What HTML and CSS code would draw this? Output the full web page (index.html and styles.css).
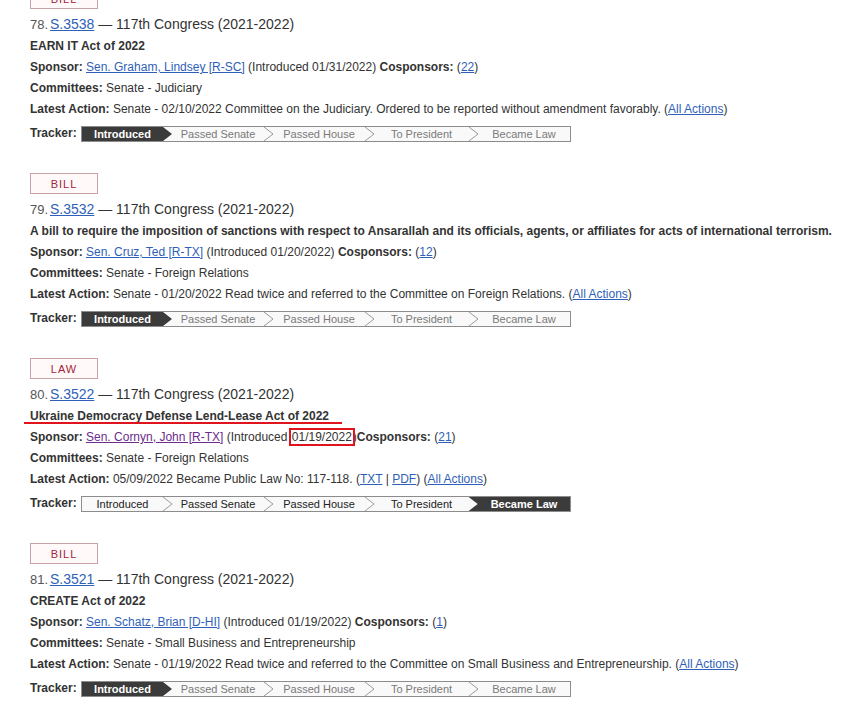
FILE: index.html
```html
<!DOCTYPE html>
<html>
<head>
<meta charset="utf-8">
<link rel="stylesheet" href="styles.css">
</head>
<body>
<ol class="results">
  <li class="item">
    <span class="badge">BILL</span>
    <div class="heading"><span class="num">78.</span> <a href="#">S.3538</a> — 117th Congress (2021-2022)</div>
    <div class="title">EARN IT Act of 2022</div>
    <div class="line"><b>Sponsor:</b> <a href="#">Sen. Graham, Lindsey [R-SC]</a> (Introduced 01/31/2022) <b>Cosponsors:</b> (<a href="#">22</a>)</div>
    <div class="line"><b>Committees:</b> Senate - Judiciary</div>
    <div class="line"><b>Latest Action:</b> Senate - 02/10/2022 Committee on the Judiciary. Ordered to be reported without amendment favorably. (<a href="#">All Actions</a>)</div>
    <div class="tracker-row"><b class="tlabel">Tracker:</b>
      <ol class="tracker">
        <li class="step s1 done first">Introduced</li>
        <li class="step s2">Passed Senate<svg class="chev" viewBox="0 0 9 14" preserveAspectRatio="none"><polyline points="0,0 9,7 0,14"/></svg></li>
        <li class="step s3">Passed House<svg class="chev" viewBox="0 0 9 14" preserveAspectRatio="none"><polyline points="0,0 9,7 0,14"/></svg></li>
        <li class="step s4">To President<svg class="chev" viewBox="0 0 9 14" preserveAspectRatio="none"><polyline points="0,0 9,7 0,14"/></svg></li>
        <li class="step s5 last">Became Law</li>
      </ol>
    </div>
  </li>
  <li class="item">
    <span class="badge">BILL</span>
    <div class="heading"><span class="num">79.</span> <a href="#">S.3532</a> — 117th Congress (2021-2022)</div>
    <div class="title">A bill to require the imposition of sanctions with respect to Ansarallah and its officials, agents, or affiliates for acts of international terrorism.</div>
    <div class="line"><b>Sponsor:</b> <a href="#">Sen. Cruz, Ted [R-TX]</a> (Introduced 01/20/2022) <b>Cosponsors:</b> (<a href="#">12</a>)</div>
    <div class="line"><b>Committees:</b> Senate - Foreign Relations</div>
    <div class="line"><b>Latest Action:</b> Senate - 01/20/2022 Read twice and referred to the Committee on Foreign Relations. (<a href="#">All Actions</a>)</div>
    <div class="tracker-row"><b class="tlabel">Tracker:</b>
      <ol class="tracker">
        <li class="step s1 done first">Introduced</li>
        <li class="step s2">Passed Senate<svg class="chev" viewBox="0 0 9 14" preserveAspectRatio="none"><polyline points="0,0 9,7 0,14"/></svg></li>
        <li class="step s3">Passed House<svg class="chev" viewBox="0 0 9 14" preserveAspectRatio="none"><polyline points="0,0 9,7 0,14"/></svg></li>
        <li class="step s4">To President<svg class="chev" viewBox="0 0 9 14" preserveAspectRatio="none"><polyline points="0,0 9,7 0,14"/></svg></li>
        <li class="step s5 last">Became Law</li>
      </ol>
    </div>
  </li>
  <li class="item">
    <span class="badge">LAW</span>
    <div class="heading"><span class="num">80.</span> <a href="#">S.3522</a> — 117th Congress (2021-2022)</div>
    <div class="title"><span class="marked">Ukraine Democracy Defense Lend-Lease Act of 2022<span class="red-line"></span></span></div>
    <div class="line"><b>Sponsor:</b> <a href="#" class="visited">Sen. Cornyn, John [R-TX]</a> (Introduced <span class="red-box">01/19/2022</span>)<b>Cosponsors:</b> (<a href="#">21</a>)</div>
    <div class="line"><b>Committees:</b> Senate - Foreign Relations</div>
    <div class="line"><b>Latest Action:</b> 05/09/2022 Became Public Law No: 117-118. (<a href="#">TXT</a> | <a href="#">PDF</a>) (<a href="#">All Actions</a>)</div>
    <div class="tracker-row"><b class="tlabel">Tracker:</b>
      <ol class="tracker law">
        <li class="step s1">Introduced<svg class="chev" viewBox="0 0 9 14" preserveAspectRatio="none"><polyline points="0,0 9,7 0,14"/></svg></li>
        <li class="step s2">Passed Senate<svg class="chev" viewBox="0 0 9 14" preserveAspectRatio="none"><polyline points="0,0 9,7 0,14"/></svg></li>
        <li class="step s3">Passed House<svg class="chev" viewBox="0 0 9 14" preserveAspectRatio="none"><polyline points="0,0 9,7 0,14"/></svg></li>
        <li class="step s4">To President<svg class="chev" viewBox="0 0 9 14" preserveAspectRatio="none"><polyline points="0,0 9,7 0,14"/></svg></li>
        <li class="step s5 last done notch">Became Law</li>
      </ol>
    </div>
  </li>
  <li class="item">
    <span class="badge">BILL</span>
    <div class="heading"><span class="num">81.</span> <a href="#">S.3521</a> — 117th Congress (2021-2022)</div>
    <div class="title">CREATE Act of 2022</div>
    <div class="line"><b>Sponsor:</b> <a href="#">Sen. Schatz, Brian [D-HI]</a> (Introduced 01/19/2022) <b>Cosponsors:</b> (<a href="#">1</a>)</div>
    <div class="line"><b>Committees:</b> Senate - Small Business and Entrepreneurship</div>
    <div class="line"><b>Latest Action:</b> Senate - 01/19/2022 Read twice and referred to the Committee on Small Business and Entrepreneurship. (<a href="#">All Actions</a>)</div>
    <div class="tracker-row"><b class="tlabel">Tracker:</b>
      <ol class="tracker">
        <li class="step s1 done first">Introduced</li>
        <li class="step s2">Passed Senate<svg class="chev" viewBox="0 0 9 14" preserveAspectRatio="none"><polyline points="0,0 9,7 0,14"/></svg></li>
        <li class="step s3">Passed House<svg class="chev" viewBox="0 0 9 14" preserveAspectRatio="none"><polyline points="0,0 9,7 0,14"/></svg></li>
        <li class="step s4">To President<svg class="chev" viewBox="0 0 9 14" preserveAspectRatio="none"><polyline points="0,0 9,7 0,14"/></svg></li>
        <li class="step s5 last">Became Law</li>
      </ol>
    </div>
  </li>
</ol>
</body>
</html>
```
FILE: styles.css
```css
html, body {
  margin: 0;
  padding: 0;
  background: #fff;
}
body {
  font-family: "Liberation Sans", Arial, sans-serif;
  color: #222;
  font-size: 12px;
  overflow: hidden;
}
a {
  color: #2f5fb8;
  text-decoration: underline;
}
a.visited {
  color: #6b2c8e;
}
.results {
  list-style: none;
  margin: -12px 0 0 0;
  padding: 0 0 0 30px;
}
.item {
  margin: 0 0 31px 0;
  padding: 0;
}
.badge {
  display: flex;
  align-items: center;
  justify-content: center;
  box-sizing: border-box;
  width: 68px;
  height: 21px;
  border: 1px solid #c9a2a8;
  background: #fff9f9;
  color: #a3243a;
  font-size: 11px;
  letter-spacing: 1px;
  margin-bottom: 4px;
}
.heading {
  font-size: 14px;
  line-height: 22px;
  color: #333;
}
.heading .num {
  color: #555;
  font-size: 13px;
  margin-right: -2px;
}
.title {
  font-weight: bold;
  line-height: 21px;
  color: #333;
}
.line {
  line-height: 21px;
  color: #333;
}
.line b {
  color: #333;
}
.marked {
  position: relative;
}
.red-line {
  position: absolute;
  left: -6px;
  width: 318px;
  bottom: -1px;
  height: 2px;
  background: #e0141c;
}
.red-box {
  outline: 2px solid #e0141c;
  outline-offset: 0;
  padding: 0 1px;
}
.tracker-row {
  display: flex;
  align-items: center;
  margin-top: 6px;
  height: 16px;
}
.tlabel {
  color: #333;
  width: 51px;
  flex: 0 0 51px;
  margin-top: -3px;
}
.tracker {
  list-style: none;
  margin: 0;
  padding: 0;
  display: flex;
  border: 1px solid #8c8c8c;
  background: #f9f9f9;
  height: 14px;
}
.step {
  position: relative;
  box-sizing: border-box;
  height: 14px;
  line-height: 14px;
  font-size: 11px;
  text-align: center;
  color: #7a7a7a;
  padding-right: 9px;
  white-space: nowrap;
}
.tracker.law .step {
  color: #222;
}
.s1 { width: 90px; }
.s2 { width: 101px; }
.s3 { width: 101px; }
.s4 { width: 104px; }
.s5 { width: 92px; padding-right: 0; }
.chev {
  position: absolute;
  right: 0;
  top: 0;
  width: 9px;
  height: 14px;
  fill: none;
  stroke: #9a9a9a;
  stroke-width: 1;
}
.tracker .step.done {
  background: #3b3b3b;
  color: #fff;
  font-weight: bold;
}
.step.first {
  clip-path: polygon(0 0, calc(100% - 9px) 0, 100% 50%, calc(100% - 9px) 100%, 0 100%);
}
.step.notch {
  margin-left: -9px;
  width: 101px;
  padding-left: 9px;
  clip-path: polygon(0 0, 100% 0, 100% 100%, 0 100%, 9px 50%);
}
```
